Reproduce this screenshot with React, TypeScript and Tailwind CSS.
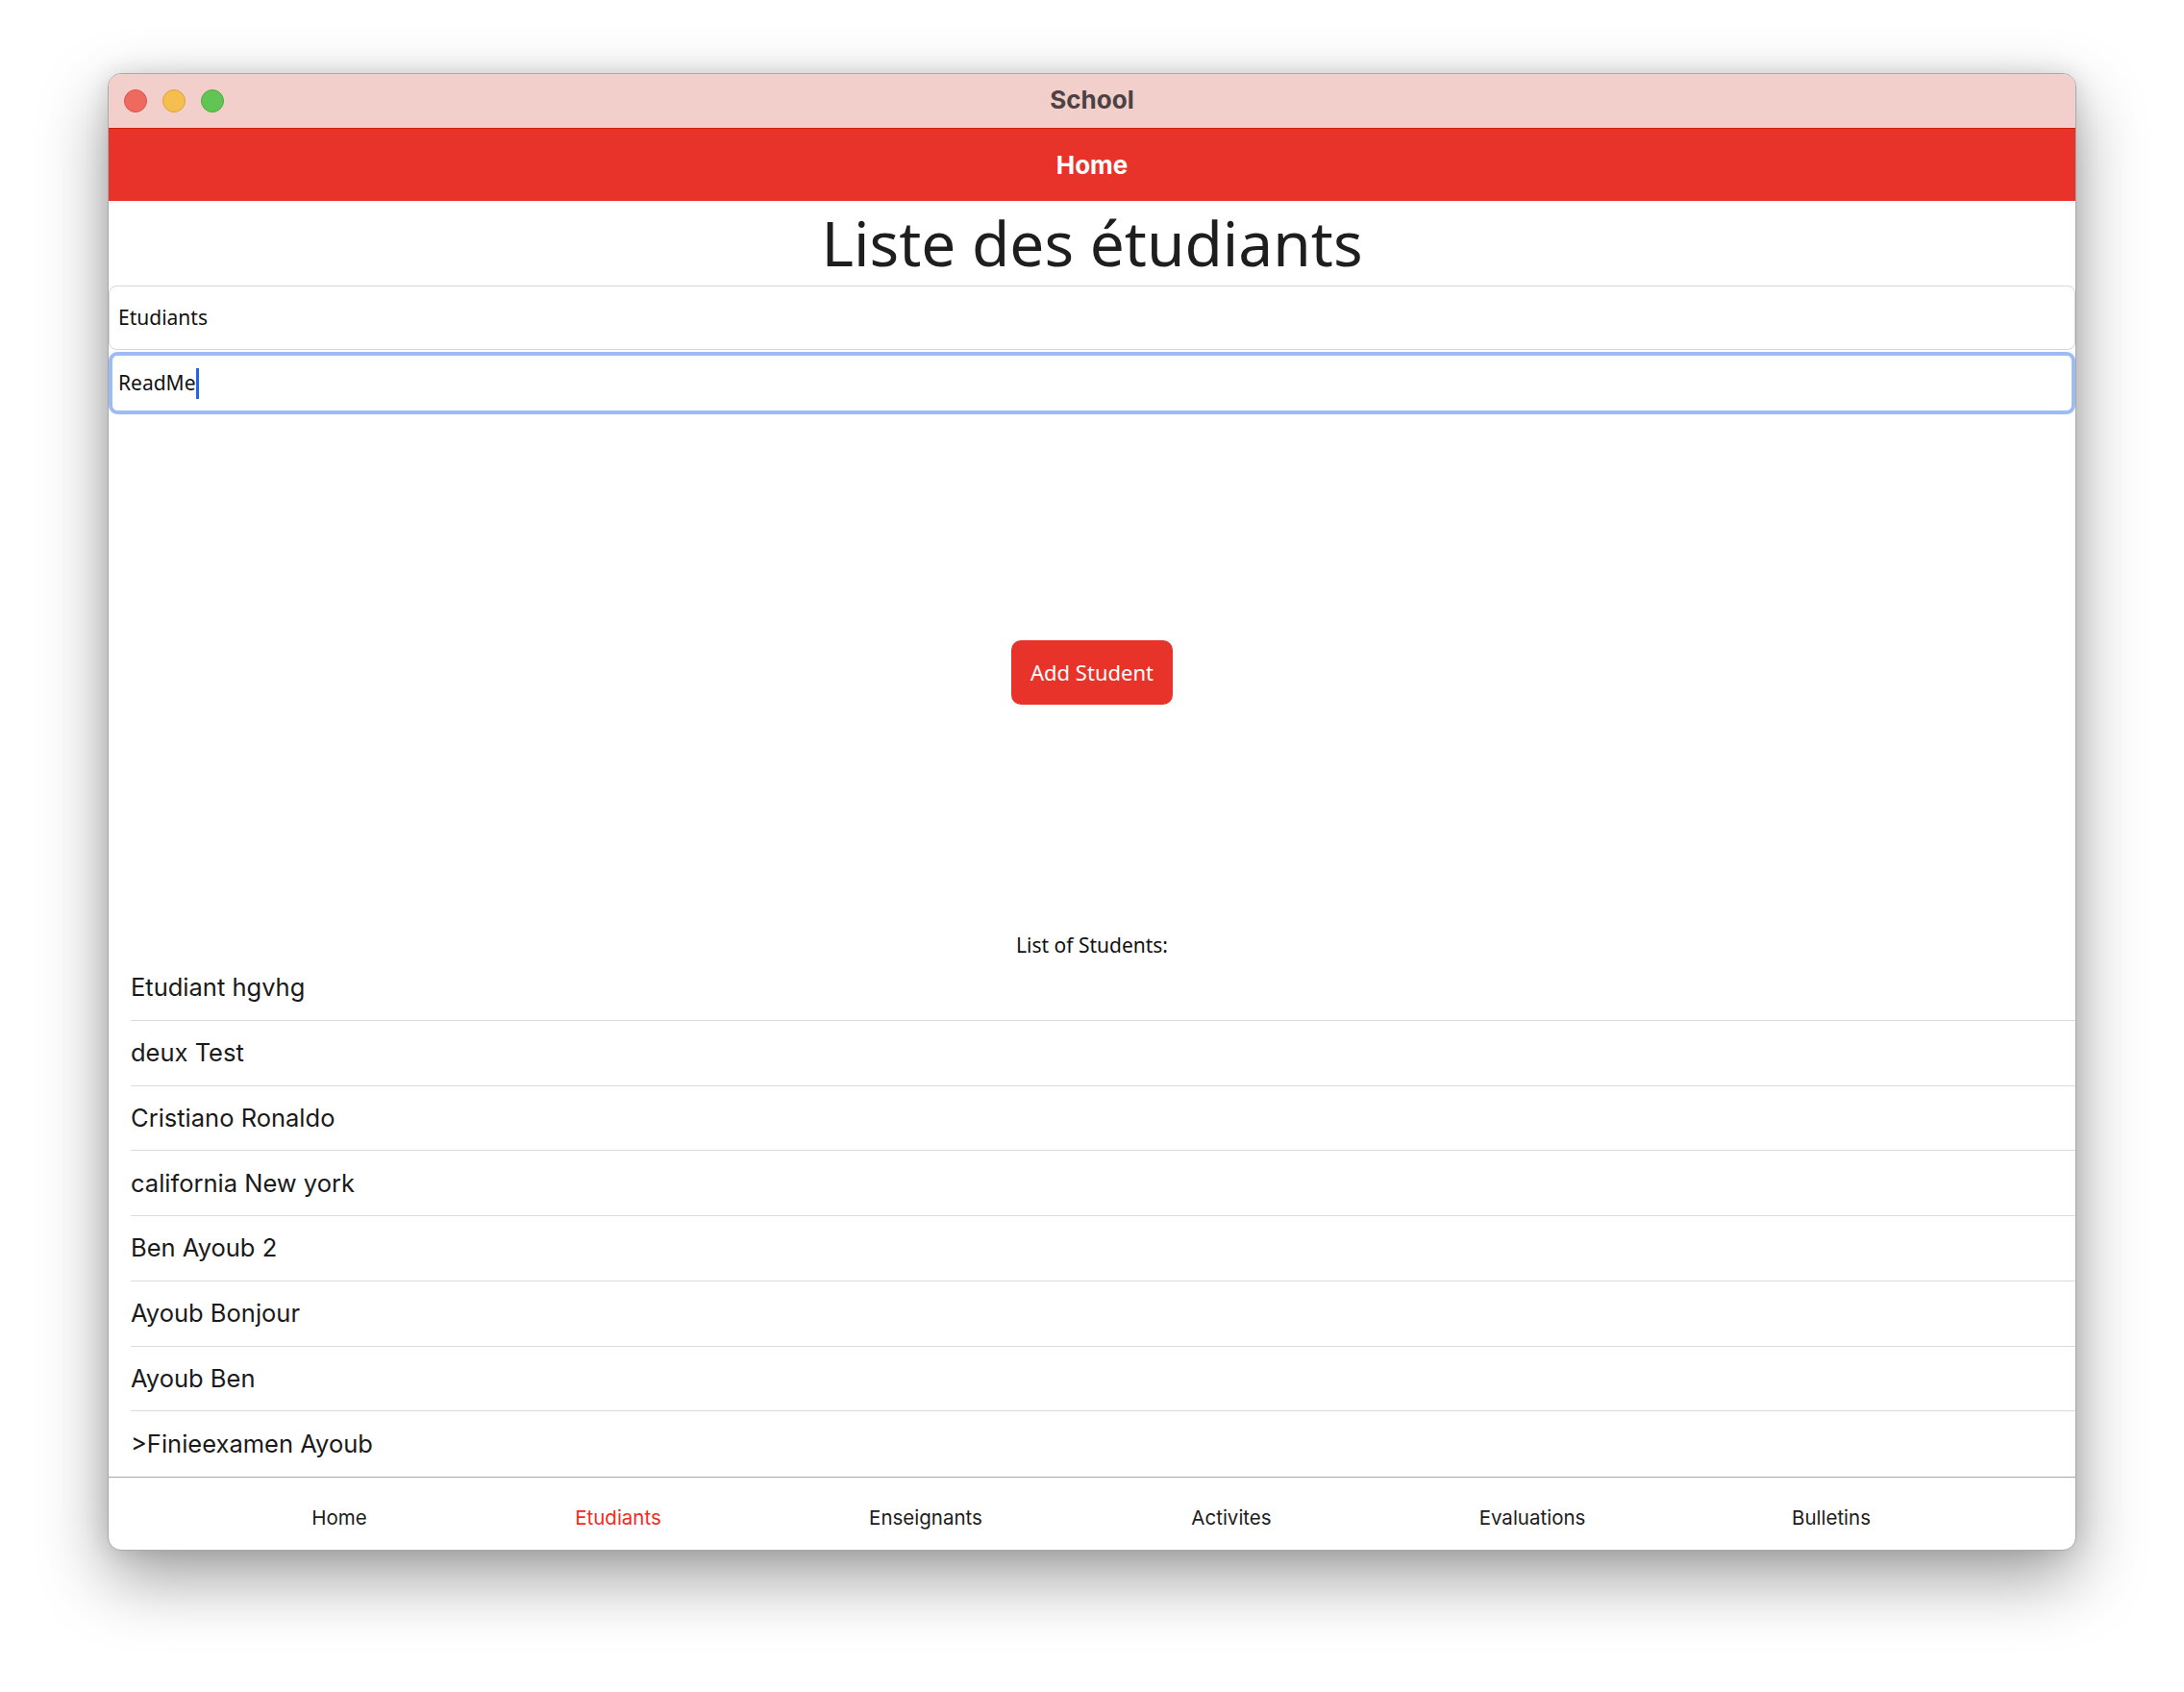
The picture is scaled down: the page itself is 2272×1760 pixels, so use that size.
import React from 'react';

const students = [
  'Etudiant hgvhg',
  'deux Test',
  'Cristiano Ronaldo',
  'california New york',
  'Ben Ayoub 2',
  'Ayoub Bonjour',
  'Ayoub Ben',
  '>Finieexamen Ayoub',
];

// widths chosen so each label's centre lands where the reference has it
const tabs = [
  { label: 'Home', width: 'w-[290px]' },
  { label: 'Etudiants', width: 'w-[290px]', active: true },
  { label: 'Enseignants', width: 'w-[350px]' },
  { label: 'Activites', width: 'w-[286px]' },
  { label: 'Evaluations', width: 'w-[340px]' },
  { label: 'Bulletins', width: 'w-[282px]' },
];

const sf = "font-['Inter','Liberation_Sans',sans-serif]";
const noto = "font-['Noto_Sans','Open_Sans',sans-serif]";

function TitleBar() {
  return (
    <div className="relative h-[56px] flex items-center justify-center bg-[#f2cfcb]">
      {/* traffic lights */}
      <div className="absolute left-[16px] top-1/2 -translate-y-1/2 flex gap-[16px]">
        <span className="w-[24px] h-[24px] rounded-full bg-[#ee6a5f] border border-[#d9534a]" />
        <span className="w-[24px] h-[24px] rounded-full bg-[#f5bf4f] border border-[#dca33a]" />
        <span className="w-[24px] h-[24px] rounded-full bg-[#61c554] border border-[#4ead41]" />
      </div>
      <span className={`${sf} text-[26px] font-bold text-[#4b4343] pb-[4px]`}>School</span>
    </div>
  );
}

export default function App() {
  return (
    <div className="w-full h-[1760px] bg-white pt-[76px] pl-[112px]">
      <div className="w-[2048px] h-[1537px] flex flex-col rounded-[14px] overflow-hidden bg-white border border-[#a9a9a9] shadow-[0_28px_70px_rgba(0,0,0,0.38),0_0_24px_rgba(0,0,0,0.12)]">
        <TitleBar />
        <div className="h-px bg-[#cf1d12]" />

        {/* Header */}
        <div className="h-[75px] flex items-center justify-center bg-[#e8332a]">
          <span className={`${sf} text-[26px] font-bold text-white`}>Home</span>
        </div>

        {/* Page title */}
        <div className="h-[88px] flex items-center justify-center">
          <h1 className={`${noto} text-[64px] leading-none text-[#1e1e1e]`}>Liste des étudiants</h1>
        </div>

        {/* Section label */}
        <div className="h-[67px] flex items-center rounded-[8px] border border-[#d6d6d6] pl-[9px]">
          <span className={`${noto} text-[21px] text-[#111]`}>Etudiants</span>
        </div>

        {/* Focused input */}
        <div className="mt-[2px] h-[65px] flex items-center rounded-[9px] border-4 border-[#9dbcf6] pl-[6px]">
          <span className={`${noto} text-[21px] text-[#111]`}>ReadMe</span>
          <span className="w-[3px] h-[32px] bg-[#2563eb]" />
        </div>

        {/* Action */}
        <div className="flex-1 flex items-center justify-center">
          <button className={`${noto} w-[168px] h-[67px] rounded-[10px] bg-[#e8332a] text-white text-[22px]`}>
            Add Student
          </button>
        </div>

        {/* Student list */}
        <div className={`${noto} h-[26px] leading-[30px] text-center text-[21px] text-[#111]`}>
          List of Students:
        </div>
        <div className="ml-[23px] flex flex-col">
          {students.map((name, i) => (
            <div
              key={name}
              className={`h-[67.75px] flex items-center ${i < students.length - 1 ? 'border-b border-[#dcdcdc]' : ''}`}
            >
              <span className={`${sf} text-[25.5px] text-[#1a1a1a]`}>{name}</span>
            </div>
          ))}
        </div>

        {/* Tab bar */}
        <div className="h-[76px] flex items-center pl-[95px] pt-[10px] border-t border-[#a6a6a6]">
          {tabs.map(t => (
            <div key={t.label} className={`${t.width} shrink-0 text-center`}>
              <span className={`${sf} text-[20.5px] ${t.active ? 'text-[#f52a1e]' : 'text-[#1c1c1c]'}`}>{t.label}</span>
            </div>
          ))}
        </div>
      </div>
    </div>
  );
}
